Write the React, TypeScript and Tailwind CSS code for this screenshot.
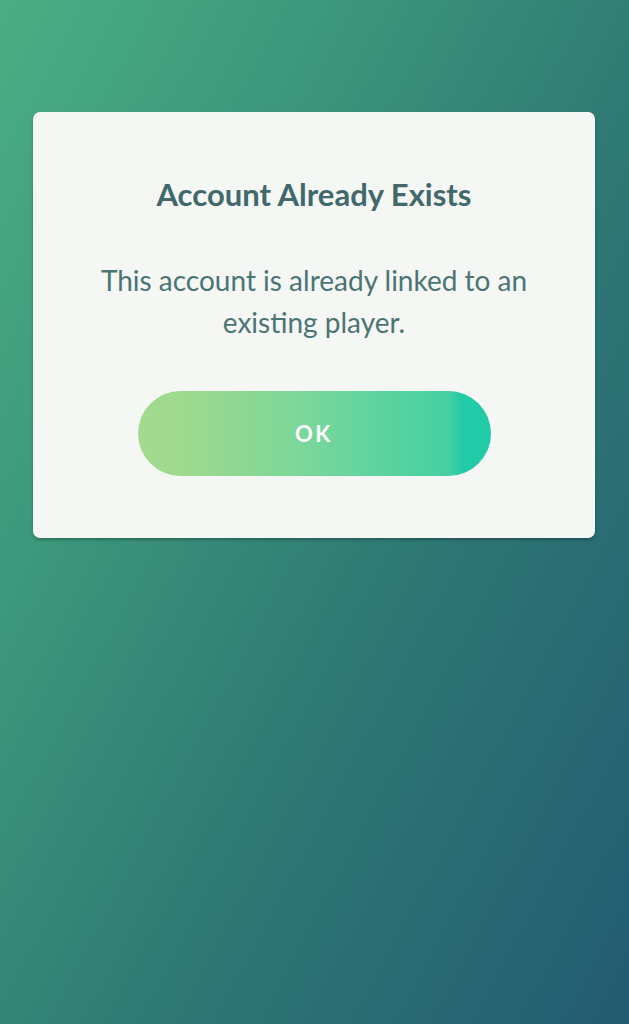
import React from "react";

export default function App() {
  return (
    <div
      className="w-[629px] h-[1024px] overflow-hidden bg-[linear-gradient(118deg,#4aae84_0%,#3c967b_30%,#2f7a74_58%,#235b72_100%)]"
      style={{ fontFamily: "Lato, 'Open Sans', sans-serif" }}
    >
      <div className="pt-[112px] px-[33px]">
        <div className="w-[562px] h-[426px] rounded-[7px] bg-[#f5f7f4] shadow-[0_2px_3px_rgba(0,0,0,0.25)] flex flex-col items-center pt-[64px]">
          <h1 className="text-[31px] leading-[36px] font-bold text-[#41696b]">
            Account Already Exists
          </h1>
          <p className="mt-[47px] text-[28px] leading-[42px] text-[#4b7474] text-center">
            This account is already linked to an
            <br />
            existing player.
          </p>
          <button className="mt-[48px] w-[353px] h-[85px] rounded-full bg-[linear-gradient(90deg,#a3da8e_0%,#9cd98e_15%,#7dd799_45%,#55d2a0_75%,#46cfa2_88%,#22cba8_92%,#22cba8_100%)] text-white text-[22px] font-bold tracking-[0.12em] flex items-center justify-center">
            OK
          </button>
        </div>
      </div>
    </div>
  );
}
